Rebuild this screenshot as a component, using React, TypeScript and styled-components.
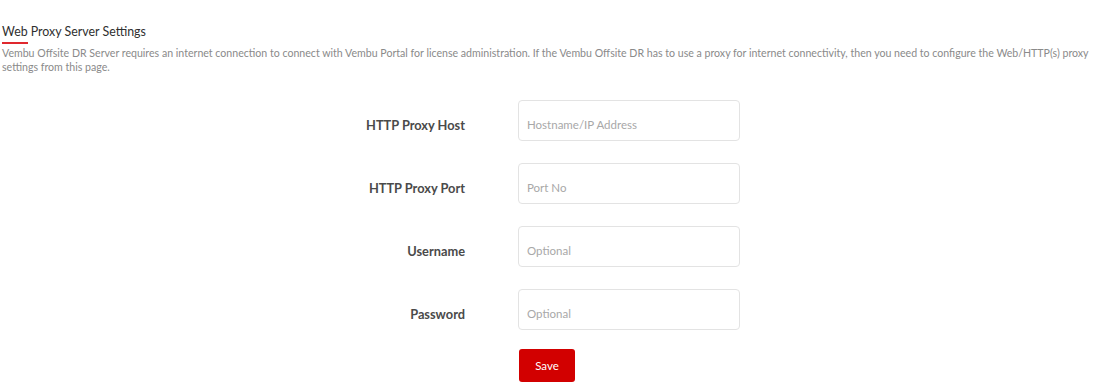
import React from "react";
import styled, { createGlobalStyle } from "styled-components";

const GlobalStyle = createGlobalStyle`
  html, body { margin: 0; padding: 0; background: #ffffff; }
  body { font-family: Lato, "Noto Sans", sans-serif; }
  * { box-sizing: border-box; }
`;

const Page = styled.div`
  padding: 24px 3px 0 2px;
  width: 1110px;
  height: 383px;
  overflow: hidden;
`;

const Title = styled.h2`
  margin: 0;
  font-size: 12.4px;
  line-height: 15px;
  font-weight: 400;
  color: #2f2f2f;
`;

const Underline = styled.div`
  width: 26px;
  height: 2px;
  margin-top: 3px;
  background: #e0282e;
`;

const Description = styled.p`
  margin: 2px 0 0;
  font-size: 10.6px;
  line-height: 14px;
  color: #8a8a8a;
`;

const Form = styled.form`
  margin-top: 26px;
  display: grid;
  grid-template-columns: 463px 222px;
  column-gap: 53px;
  row-gap: 22px;
  align-items: center;
`;

const Label = styled.label`
  justify-self: end;
  padding-top: 8px;
  font-size: 12.8px;
  font-weight: 700;
  color: #4a4a4a;
`;

const Input = styled.input`
  width: 222px;
  height: 41px;
  padding: 7px 8px 0;
  border: 1px solid #e3e3e3;
  border-radius: 4px;
  font-family: Lato, "Noto Sans", sans-serif;
  font-size: 11.5px;
  color: #333;
  outline: none;
  &::placeholder { color: #a8a8a8; }
`;

const Actions = styled.div`
  grid-column: 2;
  margin-top: -3px;
  padding-left: 1px;
`;

const SaveButton = styled.button`
  width: 56px;
  height: 33px;
  border: none;
  border-radius: 3px;
  background: #d20000;
  color: #ffffff;
  font-family: Lato, "Noto Sans", sans-serif;
  font-size: 11.5px;
  cursor: pointer;
`;

const fields = [
  { id: "host", label: "HTTP Proxy Host", placeholder: "Hostname/IP Address", type: "text" },
  { id: "port", label: "HTTP Proxy Port", placeholder: "Port No", type: "text" },
  { id: "user", label: "Username", placeholder: "Optional", type: "text" },
  { id: "pass", label: "Password", placeholder: "Optional", type: "password" },
];

export default function App() {
  return (
    <>
      <GlobalStyle />
      <Page>
        <Title>Web Proxy Server Settings</Title>
        <Underline />
        <Description>
          Vembu Offsite DR Server requires an internet connection to connect with Vembu Portal for license administration. If the Vembu Offsite DR has to use a proxy for internet connectivity, then you need to configure the Web/HTTP(s) proxy settings from this page.
        </Description>
        <Form onSubmit={(e) => e.preventDefault()}>
          {fields.map((f) => (
            <React.Fragment key={f.id}>
              <Label htmlFor={f.id}>{f.label}</Label>
              <Input id={f.id} type={f.type} placeholder={f.placeholder} />
            </React.Fragment>
          ))}
          <Actions>
            <SaveButton type="submit">Save</SaveButton>
          </Actions>
        </Form>
      </Page>
    </>
  );
}
